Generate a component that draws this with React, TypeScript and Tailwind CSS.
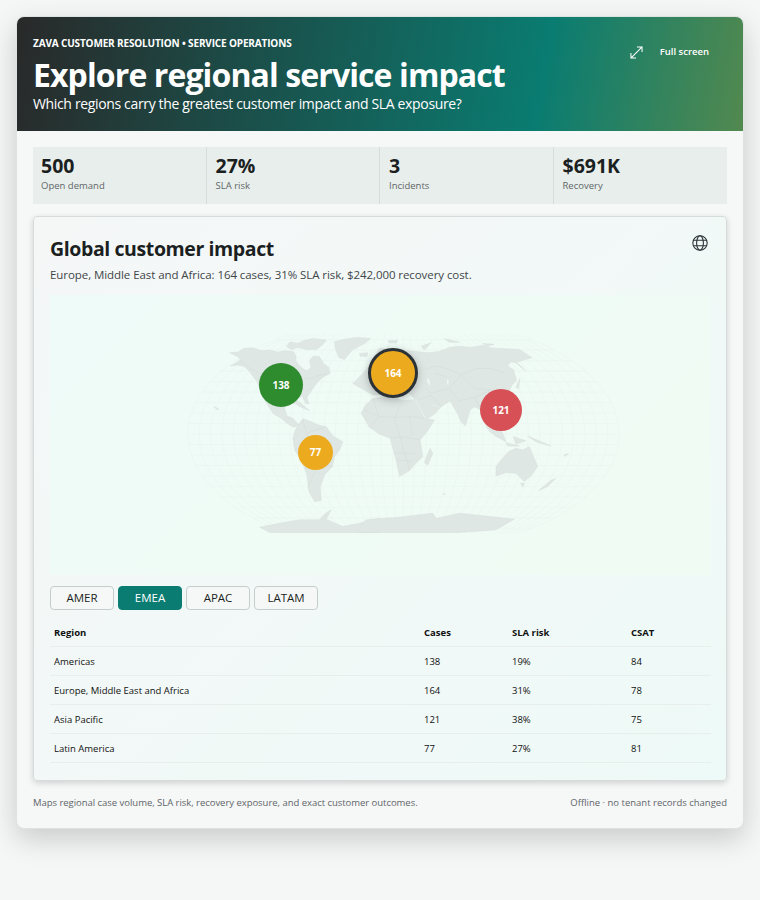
const stats = [
  { value: '500', label: 'Open demand' },
  { value: '27%', label: 'SLA risk' },
  { value: '3', label: 'Incidents' },
  { value: '$691K', label: 'Recovery' },
]

const regions = [
  { name: 'Americas', cases: 138, sla: '19%', csat: 84 },
  { name: 'Europe, Middle East and Africa', cases: 164, sla: '31%', csat: 78 },
  { name: 'Asia Pacific', cases: 121, sla: '38%', csat: 75 },
  { name: 'Latin America', cases: 77, sla: '27%', csat: 81 },
]

// graticule of the map, in page-like coordinates of the svg
const parallels = Array.from({ length: 19 }, (_, i) => 434 + (i - 9) * 10.5)
const meridians = Array.from({ length: 39 }, (_, i) => (i - 19) / 19)

function meridianPath(t: number) {
  const pts = []
  for (let k = -10; k <= 10; k++) {
    const v = k / 10
    const y = 434 + v * 100
    const x = 404 + t * 216 * Math.sqrt(1 - v * v * 0.72)
    pts.push(`${x.toFixed(1)},${y.toFixed(1)}`)
  }
  return 'M' + pts.join(' L')
}

function WorldMap() {
  return (
    <svg viewBox="50 295 661 280" className="absolute inset-0 w-full h-full">
      <g fill="none" stroke="#e8f3ef" strokeWidth="0.5">
        {parallels.map((y) => {
          const v = (y - 434) / 100
          const half = 216 * Math.sqrt(1 - v * v * 0.72)
          return <line key={y} x1={404 - half} x2={404 + half} y1={y} y2={y} />
        })}
        {meridians.map((t) => (
          <path key={t} d={meridianPath(t)} />
        ))}
      </g>
      {/* Americas and western Antarctica, traced from the left half */}
      <g transform="translate(170 310) scale(0.3333)" fill="#dfe7e4" stroke="#d6dfdc" strokeWidth="1.5" strokeLinejoin="round">
        <path d="M182 168 L198 158 L212 150 L205 140 L180 128 L205 126 L222 115 L250 113 L275 122 L300 120 L325 126 L345 122 L372 125 L380 140 L378 152 L395 172 L412 182 L424 172 L420 150 L432 138 L450 140 L462 160 L478 172 L482 190 L462 200 L445 215 L432 232 L420 250 L412 262 L418 282 L408 280 L398 258 L372 268 L350 278 L345 295 L352 318 L370 325 L388 345 L372 352 L352 340 L335 325 L312 312 L300 295 L285 270 L272 240 L262 215 L240 185 L225 170 L205 165 Z" />
        <path d="M350 108 L362 95 L385 100 L400 92 L430 85 L470 90 L458 105 L440 118 L410 118 L385 112 L365 118 Z" />
        <path d="M495 95 L520 88 L560 82 L603 85 L585 100 L548 120 L525 148 L508 142 L498 118 Z" />
        <path d="M570 130 L595 128 L592 140 L572 138 Z" />
        <path d="M375 365 L385 345 L400 326 L425 335 L445 345 L470 350 L490 378 L520 395 L510 420 L495 440 L488 470 L465 495 L452 530 L455 572 L435 575 L418 545 L412 495 L395 450 L375 420 L370 385 Z" />
        <path d="M365 275 L385 272 L420 302 L395 292 Z" />
        <path d="M132 290 L146 296 L144 300 Z" />
        <path d="M270 652 L330 640 L390 630 L450 630 L468 610 L485 600 L470 628 L520 650 L570 640 L630 625 L630 668 L300 668 Z" />
        <path d="M388 150 L402 140 L418 148 L418 170 L405 178 L392 165 Z" fill="#f0f9f6" stroke="none" />
      </g>
      {/* Old world, Australia and eastern Antarctica */}
      <g transform="translate(360 310) scale(0.3333)" fill="#dfe7e4" stroke="#d6dfdc" strokeWidth="1.5" strokeLinejoin="round">
        <path d="M85 92 L115 90 L110 98 L90 98 Z M185 108 L215 98 L195 120 Z M255 86 L300 96 L270 96 Z M370 100 L405 102 L385 108 Z" />
        <path d="M-20 220 L20 180 L60 115 L120 120 L180 125 L205 128 L240 124 L270 112 L300 108 L335 112 L370 105 L400 114 L440 116 L480 118 L518 143 L492 150 L470 158 L455 155 L445 168 L462 178 L472 210 L458 225 L450 242 L432 248 L420 262 L432 300 L420 345 L440 395 L412 380 L392 365 L382 352 L365 300 L345 290 L332 300 L318 348 L305 335 L295 312 L272 272 L245 290 L225 312 L200 330 L170 272 L150 250 L100 250 L40 255 Z" />
        <path d="M5 310 L18 285 L40 265 L70 262 L100 262 L130 272 L170 268 L185 300 L197 326 L225 330 L205 362 L182 390 L190 440 L170 460 L150 482 L120 500 L110 450 L92 385 L60 372 L30 352 Z" />
        <path d="M212 415 L220 430 L205 466 L195 458 Z" />
        <path d="M410 470 L425 450 L448 425 L470 415 L490 420 L510 410 L525 445 L535 470 L515 498 L495 515 L470 490 L440 488 L410 498 Z" />
        <path d="M484 520 L496 520 L490 532 Z" />
        <path d="M590 505 L565 530 L538 542 L575 512 Z" />
        <path d="M470 158 L482 165 L498 182 L490 175 Z M462 380 L500 392 L470 402 Z M505 378 L575 408 L530 395 Z M440 398 L480 408 L445 408 Z M615 435 L628 430 L618 440 Z M252 550 L258 552 L254 555 Z M470 232 L482 205 L478 235 Z" />
        <path d="M-10 668 L20 630 L120 622 L220 610 L230 626 L300 610 L465 628 L410 660 L300 668 Z" />
        {/* inland seas */}
        <path d="M202 204 L210 210 L213 228 L205 218 Z M263 208 L268 210 L266 226 L263 220 Z" fill="#eef7f4" stroke="none" />
        <path d="M168 268 L198 326" fill="none" stroke="#eef7f4" strokeWidth="2" />
        <path d="M218 285 L240 290" fill="none" stroke="#eef7f4" strokeWidth="1.5" />
      </g>
      {/* country borders, only the ones that read at this size */}
      <g transform="translate(360 310) scale(0.3333)" fill="none" stroke="#d2dbd8" strokeWidth="1.5" strokeLinejoin="round">
        <path d="M190 180 L230 168 L270 178 L305 195 L350 175 L395 175 L440 190 M225 190 L262 200 M200 235 L215 250 L270 235 L305 195 M270 235 L300 272 L345 262 L365 300 M305 195 L345 235 L395 240 L420 262 M345 262 L395 240 M175 270 L215 255 L245 290" />
        <path d="M40 265 L58 320 L30 352 M58 320 L105 322 L130 272 M105 322 L122 380 L92 385 M122 380 L182 390 M122 380 L150 482 M105 430 L170 430 M105 322 L170 320 L195 326 M15 300 L58 320 M150 320 L160 375 M110 450 L160 455" />
      </g>
      <g transform="translate(170 310) scale(0.3333)" fill="none" stroke="#d2dbd8" strokeWidth="1.5" strokeLinejoin="round">
        <path d="M240 175 L300 205 L420 205 L470 190 M212 150 L240 175 M280 260 L360 275 M400 330 L410 370 L470 350 M375 420 L430 410 L445 460 L490 470 M415 535 L445 460 M430 410 L410 370" />
      </g>
    </svg>
  )
}

function Marker({ value, color, className, ring }: { value: number; color: string; className: string; ring?: boolean }) {
  return (
    <div
      className={`absolute flex items-center justify-center rounded-full text-[10px] font-bold text-white ${color} ${className} ${
        ring ? 'border-[3px] border-[#2b3338] shadow-[0_2px_8px_rgba(0,0,0,0.25)]' : ''
      }`}
    >
      {value}
    </div>
  )
}

export default function App() {
  return (
    <div className="min-h-[900px] bg-[#f5f7f6] p-4 text-[#1b1f22] font-['Open_Sans','Noto_Sans',sans-serif]">
      <div className="overflow-hidden rounded-lg border border-[#dde3e1] bg-[#f6f7f7] shadow-[0_10px_28px_rgba(0,0,0,0.18)]">
        <header className="flex h-[114px] items-start justify-between bg-[linear-gradient(100deg,#292929_0%,#0a7c71_72%,#52894f_100%)] pl-4 pr-4 text-white">
          <div className="pt-[19px]">
            <div className="text-[10px] font-bold leading-[14px] tracking-[-0.15px]">ZAVA CUSTOMER RESOLUTION • SERVICE OPERATIONS</div>
            <h1 className="mt-[10px] text-[32px] font-bold leading-[30px] tracking-[-0.9px]">Explore regional service impact</h1>
            <p className="mt-[5px] text-[14px] leading-[18px] tracking-[-0.35px]">Which regions carry the greatest customer impact and SLA exposure?</p>
          </div>
          <div className="mr-[18px] mt-[28px] flex items-center gap-[17px]">
            <svg viewBox="0 0 14 14" className="h-[13px] w-[13px]" fill="none" stroke="#ffffff" strokeWidth="1.1">
              <path d="M1 13 L13 1 M7.5 1 H13 V6.5 M1 7.5 V13 H6.5" />
            </svg>
            <span className="text-[9.5px] font-semibold">Full screen</span>
          </div>
        </header>

        <div className="p-4 pb-[18px]">
          <div className="grid grid-cols-4 bg-[#e8eeeb]">
            {stats.map((s, i) => (
              <div key={s.label} className={`h-[57px] pr-2 pt-[6px] ${i === 0 ? 'pl-2' : 'pl-[9px]'} ${i < 3 ? 'border-r border-[#d5dcd9]' : ''}`}>
                <div className="text-[19.5px] font-bold leading-[26px] text-[#1b1f22]">{s.value}</div>
                <div className="text-[9.5px] leading-[14px] text-[#5f6669]">{s.label}</div>
              </div>
            ))}
          </div>

          <section className="mt-3 rounded border border-[#d5dcd9] bg-[linear-gradient(135deg,#f5f7f7_0%,#eefaf7_100%)] px-4 pb-[17px] pt-[18px] shadow-[0_2px_6px_rgba(0,0,0,0.16)]">
            <div className="flex items-start justify-between">
              <h2 className="text-[19.5px] font-bold leading-[28px] tracking-[-0.4px]">Global customer impact</h2>
              <svg viewBox="0 0 16 16" className="mr-[2px] h-4 w-4" fill="none" stroke="#2b3338" strokeWidth="1.1">
                <circle cx="8" cy="8" r="7.2" />
                <ellipse cx="8" cy="8" rx="3.4" ry="7.2" />
                <path d="M1.4 5.3 H14.6 M1.4 10.7 H14.6" />
              </svg>
            </div>
            <p className="mt-[3px] text-[11.5px] leading-[18px] tracking-[-0.07px] text-[#3f4649]">Europe, Middle East and Africa: 164 cases, 31% SLA risk, $242,000 recovery cost.</p>

            <div className="relative mt-[11px] h-[280px] bg-[linear-gradient(135deg,#effbf8_0%,#f0fbf3_100%)]">
              <WorldMap />
              <Marker value={138} color="bg-[#2e8b2e]" className="left-[209px] top-[68px] h-11 w-11" />
              <Marker value={164} color="bg-[#ecab1f]" className="left-[318px] top-[53px] h-[50px] w-[50px]" ring />
              <Marker value={121} color="bg-[#d65056]" className="left-[430px] top-[94px] h-[42px] w-[42px]" />
              <Marker value={77} color="bg-[#ecab1f]" className="left-[248px] top-[140px] h-[35px] w-[35px]" />
            </div>

            <div className="mt-[11px] flex gap-1">
              {['AMER', 'EMEA', 'APAC', 'LATAM'].map((tab) => (
                <button
                  key={tab}
                  className={`h-6 w-16 rounded border text-[11.5px] ${
                    tab === 'EMEA' ? 'border-[#0a7c71] bg-[#0a7c71] text-white' : 'border-[#c4cecb] bg-[#f6f8f7] text-[#1b1f22]'
                  }`}
                >
                  {tab}
                </button>
              ))}
            </div>

            <table className="mt-2 w-[661px] table-fixed text-[9.5px] text-[#111]">
              <colgroup>
                <col className="w-[370px]" />
                <col className="w-[88px]" />
                <col className="w-[119px]" />
                <col className="w-[84px]" />
              </colgroup>
              <thead>
                <tr className="h-[28px] border-b border-[#e8eeec] text-left">
                  <th className="px-1 pt-[2px] font-bold">Region</th>
                  <th className="px-1 pt-[2px] font-bold">Cases</th>
                  <th className="px-1 pt-[2px] font-bold">SLA risk</th>
                  <th className="px-1 pt-[2px] font-bold">CSAT</th>
                </tr>
              </thead>
              <tbody>
                {regions.map((r) => (
                  <tr key={r.name} className="h-[29px] border-b border-[#e8eeec]">
                    <td className="px-1 pt-[3px]">{r.name}</td>
                    <td className="px-1 pt-[3px]">{r.cases}</td>
                    <td className="px-1 pt-[3px]">{r.sla}</td>
                    <td className="px-1 pt-[3px]">{r.csat}</td>
                  </tr>
                ))}
              </tbody>
            </table>
          </section>

          <footer className="mt-[15px] flex justify-between text-[9.5px] leading-[14px] text-[#5f6669]">
            <span className="tracking-[-0.035px]">Maps regional case volume, SLA risk, recovery exposure, and exact customer outcomes.</span>
            <span>Offline · no tenant records changed</span>
          </footer>
        </div>
      </div>
    </div>
  )
}
